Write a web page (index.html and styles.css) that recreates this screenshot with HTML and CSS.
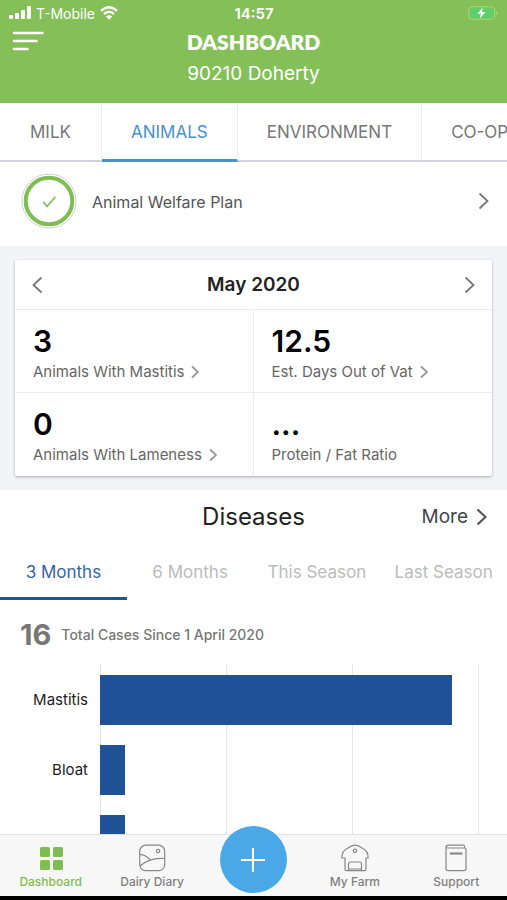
FILE: index.html
```html
<!DOCTYPE html>
<html lang="en">
<head>
<meta charset="utf-8">
<meta name="viewport" content="width=device-width, initial-scale=1">
<title>Dashboard</title>
<link rel="stylesheet" href="styles.css">
</head>
<body>
<header class="header">
  <div class="status">
    <div class="carrier">
      <svg class="signal" width="22" height="14" viewBox="0 0 22 14" aria-hidden="true"><rect x="0" y="9" width="4" height="4" rx="1"/><rect x="6" y="7" width="4" height="6" rx="1"/><rect x="12" y="4" width="4" height="9" rx="1"/><rect x="18" y="0" width="4" height="13" rx="1"/></svg>
      <span>T-Mobile</span>
      <svg class="wifi" width="18" height="14" viewBox="0 0 18 14" aria-hidden="true"><path d="M1 4.800Q9-2.400 17 4.800M4 8Q9 3.400 14 8"/><path class="wifi-dot" d="M9 13.800 5.800 10.600Q9 8 12.200 10.600Z"/></svg>
    </div>
    <span class="clock">14:57</span>
    <svg class="battery" width="31" height="14" viewBox="0 0 31 14" aria-hidden="true"><rect class="battery-shell" x=".7" y=".7" width="26" height="12.600" rx="3.500"/><rect class="battery-fill" x="2" y="2" width="23.400" height="10" rx="2"/><path class="battery-cap" d="M28 4.500q3 2.500 0 5z"/><path class="bolt" d="M14.800 1.500 9.500 7.700h3.300l-1 4.800 5.600-6.400H14z"/></svg>
  </div>
  <div class="titlebar">
    <button class="menu" aria-label="Menu"><svg width="32" height="20" viewBox="0 0 32 20" aria-hidden="true"><path d="M2 2h28.500M2 10h22.500M2 18h13.500"/></svg></button>
    <div class="titles">
      <h1 class="title">DASHBOARD</h1>
      <p class="subtitle">90210 Doherty</p>
    </div>
  </div>
</header>

<nav class="sections" aria-label="Sections">
  <a class="section" href="#milk">MILK</a>
  <a class="section section-active" href="#animals" aria-current="page">ANIMALS</a>
  <a class="section" href="#environment">ENVIRONMENT</a>
  <a class="section" href="#co-op">CO-OP</a>
</nav>

<main class="content">
  <a class="plan" href="#plan">
    <svg class="plan-badge" width="56" height="56" viewBox="0 0 56 56" aria-hidden="true"><circle class="badge-edge" cx="28" cy="28" r="27"/><circle class="badge-ring" cx="28" cy="28" r="23.300"/><path class="badge-check" d="m22.300 28.800 3.800 4.700 8.200-9.700"/></svg>
    <span class="plan-label">Animal Welfare Plan</span>
    <svg class="arrow" width="11" height="18" viewBox="0 0 11 18" aria-hidden="true"><path d="m1.500 1.500 8 7.500-8 7.500"/></svg>
  </a>

  <section class="summary">
    <div class="card">
      <div class="month">
        <button class="step" aria-label="Previous month"><svg class="arrow" width="11" height="18" viewBox="0 0 11 18" aria-hidden="true"><path d="m9.500 1.500-8 7.500 8 7.500"/></svg></button>
        <h2 class="month-name">May 2020</h2>
        <button class="step" aria-label="Next month"><svg class="arrow" width="11" height="18" viewBox="0 0 11 18" aria-hidden="true"><path d="m1.500 1.500 8 7.500-8 7.500"/></svg></button>
      </div>
      <div class="stats">
        <a class="stat" href="#mastitis"><span class="stat-value">3</span><span class="stat-label">Animals With Mastitis <svg class="arrow-small" width="8" height="14" viewBox="0 0 8 14" aria-hidden="true"><path d="m1 1.500 6 5.500-6 5.500"/></svg></span></a>
        <a class="stat" href="#vat"><span class="stat-value">12.5</span><span class="stat-label">Est. Days Out of Vat <svg class="arrow-small" width="8" height="14" viewBox="0 0 8 14" aria-hidden="true"><path d="m1 1.500 6 5.500-6 5.500"/></svg></span></a>
        <a class="stat" href="#lameness"><span class="stat-value">0</span><span class="stat-label">Animals With Lameness <svg class="arrow-small" width="8" height="14" viewBox="0 0 8 14" aria-hidden="true"><path d="m1 1.500 6 5.500-6 5.500"/></svg></span></a>
        <div class="stat"><span class="stat-value">...</span><span class="stat-label">Protein / Fat Ratio</span></div>
      </div>
    </div>
  </section>

  <section class="diseases">
    <div class="diseases-head">
      <h2 class="diseases-title">Diseases</h2>
      <a class="more" href="#diseases">More <svg class="arrow arrow-bold" width="11" height="18" viewBox="0 0 11 18" aria-hidden="true"><path d="m1.500 1.500 8 7.500-8 7.500"/></svg></a>
    </div>
    <div class="periods">
      <button class="period period-active" aria-pressed="true">3 Months</button>
      <button class="period">6 Months</button>
      <button class="period">This Season</button>
      <button class="period">Last Season</button>
    </div>
    <p class="total"><strong class="total-value">16</strong><span>Total Cases Since 1 April 2020</span></p>
    <div class="chart">
      <div class="names"><span>Mastitis</span><span>Bloat</span></div>
      <div class="plot">
        <div class="gridlines"><i></i><i></i><i></i></div>
        <div class="bars">
          <div class="bar" style="width:93%"></div>
          <div class="bar" style="width:6.67%"></div>
          <div class="bar" style="width:6.67%"></div>
        </div>
      </div>
    </div>
  </section>
</main>

<nav class="tabbar" aria-label="Main">
  <a class="tab tab-active" href="#dashboard" aria-current="page">
    <svg width="28" height="28" viewBox="0 0 28 28" aria-hidden="true"><g class="tiles"><rect x="3" y="3" width="10" height="10" rx="1.500"/><rect x="16" y="3" width="10" height="10" rx="1.500"/><rect x="3" y="16" width="10" height="10" rx="1.500"/><rect x="16" y="16" width="10" height="10" rx="1.500"/></g></svg>
    <span>Dashboard</span>
  </a>
  <a class="tab" href="#diary">
    <svg width="28" height="28" viewBox="0 0 28 28" aria-hidden="true"><rect x="1.700" y="1.200" width="25" height="25.500" rx="6"/><circle cx="20" cy="7" r="1.700"/><path d="M1.700 10.300c5 .2 8 2.500 11 6M2 22c6-5.500 14-8.500 24.700-7.500"/></svg>
    <span>Dairy Diary</span>
  </a>
  <button class="add" aria-label="Add"><svg width="26" height="26" viewBox="0 0 26 26" aria-hidden="true"><path d="M13 1v24M1 13h24"/></svg></button>
  <a class="tab" href="#farm">
    <svg width="28" height="28" viewBox="0 0 28 28" aria-hidden="true"><path d="M4 14H.8C.8 8 3.500 5.500 7 4c4.500-3.700 9.500-3.700 14 0 3.500 1.500 6.200 4 6.200 10H25v11.200q0 1.500-1.500 1.500h-18Q4 26.700 4 25.200z"/><circle cx="14" cy="6.700" r="1.700"/><path d="M7.500 26.700V20q0-2 2-2h9q2 0 2 2v6.700M7.500 25h13"/></svg>
    <span>My Farm</span>
  </a>
  <a class="tab" href="#support">
    <svg width="28" height="28" viewBox="0 0 28 28" aria-hidden="true"><path d="M22.500 4V2.500q0-1.300-1.300-1.300H6.300Q4 1.200 4 3.500v21q0 2.200 2.200 2.200h15.600q2.200 0 2.200-2.200v-19Q24 4 22.500 4H6Q4 4 4 2.500"/><path class="book-line" d="M7.800 9.500h12.700"/></svg>
    <span>Support</span>
  </a>
</nav>
</body>
</html>
```
FILE: styles.css
```css
* { box-sizing: border-box; }

body {
  display: flex;
  flex-direction: column;
  height: 100vh;
  margin: 0;
  background: #fff;
  color: #222;
  font-family: Inter, "Liberation Sans", sans-serif;
}

h1, h2, p { margin: 0; }
a { color: inherit; text-decoration: none; }
button { padding: 0; border: 0; background: none; color: inherit; font: inherit; cursor: pointer; }
svg { display: block; flex: none; fill: none; }

/* Header */
.header { flex: none; padding: 3px 0 6px; background: #85bf58; color: #fff; }
.status {
  display: grid;
  grid-template-columns: 1fr auto 1fr;
  align-items: center;
  height: 20px;
  padding: 0 8px 0 9px;
  font-size: 14px;
}
.carrier { display: flex; align-items: center; gap: 5px; }
.signal { fill: #fff; }
.wifi { stroke: #fff; stroke-width: 2.4; }
.wifi .wifi-dot { fill: #fff; stroke: none; }
.clock { font-size: 15px; font-weight: 600; }
.battery { justify-self: end; }
.battery-shell { stroke: #a6d77f; }
.battery-fill { fill: #5dcf6b; }
.battery-cap { fill: #a6d77f; }
.bolt { fill: #fff; }
.titlebar { display: grid; grid-template-columns: 44px 1fr 44px; align-items: start; height: 74px; }
.menu { padding: 8px 0 0 12px; }
.menu svg { stroke: #fff; stroke-width: 2.6; stroke-linecap: round; }
.titles { padding-top: 5px; text-align: center; }
.title { font: 800 21px/28px Lato, sans-serif; }
.subtitle { margin-top: 4px; font-size: 19px; line-height: 28px; }

/* Section tabs */
.sections { display: flex; flex: none; height: 59px; overflow-x: auto; scrollbar-width: none; }
.section {
  flex: none;
  padding: 1px 29px 0;
  border-right: 1px solid #ececef;
  border-bottom: 2px solid #d3d3df;
  color: #777;
  font-size: 17px;
  line-height: 56px;
}
.section:first-child { padding-inline: 30px; }
.section-active { border-bottom: 3px solid #4592cc; color: #4592cc; }

/* Scrolling content */
.content { flex: 1; min-height: 0; overflow-y: auto; scrollbar-width: none; }
.arrow { stroke: #777; stroke-width: 1.8; }
.arrow-bold { stroke: #555; stroke-width: 2.2; }
.arrow-small { stroke: #999; stroke-width: 1.8; }

.plan { display: flex; align-items: center; height: 84px; padding: 0 18px 6px 21px; }
.plan-badge { stroke-width: 1; }
.badge-edge { stroke: #d0d0d0; }
.badge-ring { stroke: #7fbd52; stroke-width: 4; }
.badge-check { stroke: #7fbd52; stroke-width: 1.6; }
.plan-label { flex: 1; margin-left: 15px; padding-top: 2px; color: #555; font-size: 16px; }

.summary { padding: 14px 15px; background: #f2f4f8; }
.card { border-radius: 2px; background: #fff; box-shadow: 0 1px 3px rgba(0, 0, 0, .3); }
.month {
  display: flex;
  align-items: center;
  justify-content: space-between;
  height: 50px;
  padding: 0 17px;
  border-bottom: 1px solid #ececef;
}
.month-name { font-size: 19px; font-weight: 600; }
.stats { display: grid; grid-template-columns: 1fr 1fr; }
.stat {
  display: flex;
  flex-direction: column;
  height: 83px;
  padding: 14px 0 0 18px;
}
.stat:nth-child(odd) { border-right: 1px solid #ececef; }
.stat:nth-child(-n+2) { border-bottom: 1px solid #ececef; }
.stat-value { color: #000; font-size: 30px; font-weight: 600; line-height: 34px; }
.stat-label { display: flex; align-items: center; gap: 7px; margin-top: 4px; color: #666; font-size: 15px; line-height: 20px; }

/* Diseases */
.diseases-head {
  display: grid;
  grid-template-columns: 1fr auto 1fr;
  align-items: center;
  height: 53px;
  padding: 0 20px;
}
.diseases-title { grid-column: 2; font-size: 24px; font-weight: 400; }
.more { display: flex; align-items: center; justify-content: flex-end; gap: 8px; color: #444; font-size: 19px; }
.periods { display: grid; grid-template-columns: repeat(4, 1fr); }
.period {
  height: 57px;
  padding-top: 3px;
  border-bottom: 3px solid transparent;
  color: #bbb;
  font-size: 17px;
  white-space: nowrap;
}
.period-active { border-color: #205298; color: #3463aa; }
.total { display: flex; align-items: center; gap: 10px; height: 64px; padding: 4px 20px 0; color: #777; font-size: 14px; font-weight: 500; }
.total-value { font-size: 29px; font-weight: 700; }

.chart { display: grid; grid-template-columns: 88px 1fr; column-gap: 12px; height: 240px; padding-right: 28px; }
.names { display: grid; grid-auto-rows: 50px; align-content: start; row-gap: 20px; padding-top: 11px; font-size: 15px; line-height: 50px; text-align: right; }
.plot { display: grid; }
.gridlines, .bars { grid-area: 1 / 1; }
.gridlines { display: grid; grid-template-columns: repeat(3, 1fr); border-left: 1px solid #e6e6e6; }
.gridlines i { border-right: 1px solid #e6e6e6; }
.bars { display: flex; flex-direction: column; gap: 20px; padding-top: 11px; }
.bar { height: 50px; background: #205298; }

/* Bottom tab bar */
.tabbar {
  display: grid;
  grid-template-columns: repeat(5, 1fr);
  position: relative;
  flex: none;
  height: 66px;
  border-top: 1px solid #e2e2e2;
  border-bottom: 4px solid #000;
  background: #f7f7f7;
}
.tab { display: flex; flex-direction: column; align-items: center; gap: 2px; padding-top: 9px; color: #808080; font-size: 12px; font-weight: 500; line-height: 16px; }
.tab svg { stroke: #888; stroke-width: 1.2; }
.tab .book-line { stroke-width: 2.2; }
.tab-active { color: #7fbd52; }
.tab .tiles { fill: #7fbd52; stroke: none; }
.add {
  display: grid;
  place-items: center;
  place-self: start center;
  width: 67px;
  height: 67px;
  margin-top: -9px;
  border-radius: 50%;
  background: #4aa8e8;
}
.add svg { stroke: #fff; stroke-width: 2; }
```
